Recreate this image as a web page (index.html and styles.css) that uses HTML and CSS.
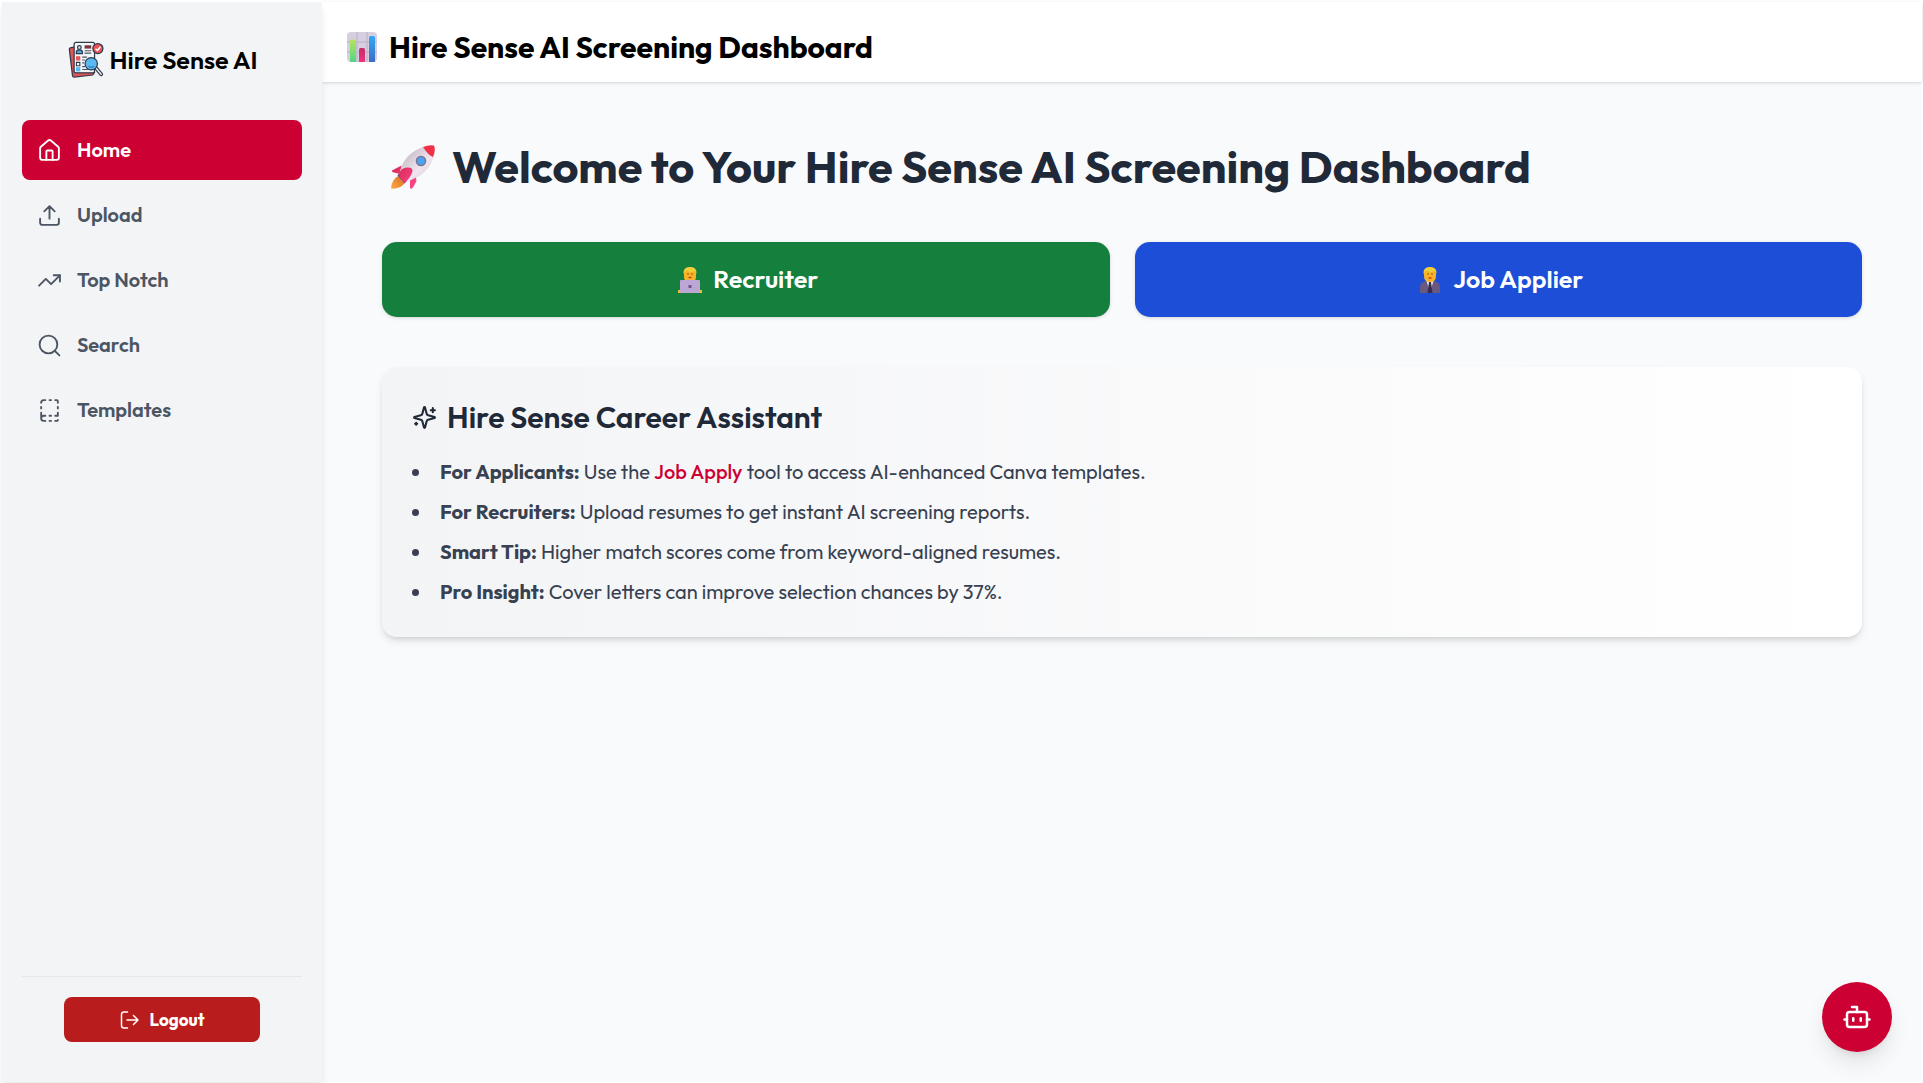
FILE: index.html
```html
<!DOCTYPE html>
<html lang="en">
<head>
<meta charset="utf-8">
<meta name="viewport" content="width=device-width, initial-scale=1">
<title>Hire Sense AI</title>
<link rel="stylesheet" href="styles.css">
</head>
<body>
<div class="shell">
  <aside class="sidebar">
    <div class="brand">
      <svg class="brand-logo" viewBox="0 0 38 40" aria-hidden="true">
        <g stroke="#2f3a48" stroke-width="1.3" stroke-linejoin="round" stroke-linecap="round">
          <path d="M6 6.500 2.500 7.200Q1.300 7.500 1.500 9L4.800 36.500Q5 38 6.500 38L26 35.800 28 33Z" fill="#e2555a"/>
          <rect x="6.500" y="1.500" width="21.500" height="32" rx="2" fill="#f3f6f9"/>
          <circle cx="12" cy="6.800" r="1.900" fill="#d7e3ee"/>
          <path d="M8.800 13.300v-1.500q0-2.500 3.200-2.500t3.300 2.500v1.500z" fill="#4fa9e6"/>
          <path d="m29.500 28.500 5.500 6.500" stroke-width="4"/>
          <path d="m29.500 28.500 5.500 6.500" stroke="#e9edf1" stroke-width="1.600"/>
          <circle cx="24.500" cy="24" r="6.500" fill="#5ab9f2"/>
          <circle cx="31.500" cy="8" r="5.300" fill="#ea5358"/>
        </g>
        <path d="m29 8.200 2 1.800 3.300-4" fill="none" stroke="#fff" stroke-width="1.600"/>
        <path d="M17.500 4.500h7v3.500h-7z" fill="#7b353c"/>
        <path d="M17.500 10.300h7M17.500 12.800h7M15 17h5M15 20h3M15 23h2M15 27h3M15 30h6" stroke="#4b5563" stroke-width="1.200"/>
        <path d="M8.500 16h4.500v4.500H8.500z" fill="#ea5358"/>
        <path d="M9 22.500h3.500V26H9z" fill="#fff" stroke="#2f3a48" stroke-width="1.200"/>
        <path d="M8.500 27.500h4.500V32H8.500z" fill="#5ab9f2"/>
        <path d="M21.500 26.500q3 2.500 6 0" fill="none" stroke="#2679b8" stroke-width="1.200"/>
      </svg>
      <span>Hire Sense AI</span>
    </div>
    <nav class="nav" aria-label="Main">
      <a class="nav-link active" href="#home" aria-current="page">
        <svg class="icon" viewBox="0 0 24 24"><path d="M15 21v-8a1 1 0 0 0-1-1h-4a1 1 0 0 0-1 1v8"/><path d="M3 10a2 2 0 0 1 .709-1.528l7-5.999a2 2 0 0 1 2.582 0l7 5.999A2 2 0 0 1 21 10v9a2 2 0 0 1-2 2H5a2 2 0 0 1-2-2z"/></svg>
        Home</a>
      <a class="nav-link" href="#upload">
        <svg class="icon" viewBox="0 0 24 24"><path d="M12 3v12M17 8l-5-5-5 5M21 15v4a2 2 0 0 1-2 2H5a2 2 0 0 1-2-2v-4"/></svg>
        Upload</a>
      <a class="nav-link" href="#top-notch">
        <svg class="icon" viewBox="0 0 24 24"><path d="M16 7h6v6"/><path d="m22 7-8.500 8.500-5-5L2 17"/></svg>
        Top Notch</a>
      <a class="nav-link" href="#search">
        <svg class="icon" viewBox="0 0 24 24"><circle cx="11" cy="11" r="8.500"/><path d="m21.500 21.500-4.400-4.400"/></svg>
        Search</a>
      <a class="nav-link" href="#templates">
        <svg class="icon" viewBox="0 0 24 24"><path d="M12 17h1.500M12 22h1.500M12 2h1.500M17.500 22H19a1 1 0 0 0 1-1M17.500 2H19a1 1 0 0 1 1 1v1.500M20 14v3h-2.500M20 8.500V10M4 10V8.500M4 19.500V14M4 4.500A2.500 2.500 0 0 1 6.500 2H8M8 22H6.500a1 1 0 0 1 0-5H8"/></svg>
        Templates</a>
    </nav>
    <div class="sidebar-foot">
      <button class="logout" type="button">
        <svg class="icon-logout" viewBox="0 0 20 20"><path d="M7.500 2H4Q1.500 2 1.500 4.500v11Q1.500 18 4 18h3.500"/><path d="M7 10h11M13.500 5.500 18 10l-4.500 4.500"/></svg>
        Logout</button>
    </div>
  </aside>

  <div class="page">
    <header class="topbar">
      <span class="topbar-title">
        <svg class="emoji emoji-md" viewBox="0 0 30 30" role="img" aria-label="Bar chart">
          <defs>
            <linearGradient id="bar-green" x1="0" y1="0" x2="0" y2="1"><stop offset="0" stop-color="#b6e35e"/><stop offset="1" stop-color="#52d684"/></linearGradient>
            <linearGradient id="bar-pink" x1="0" y1="0" x2="0" y2="1"><stop offset="0" stop-color="#c52d68"/><stop offset="1" stop-color="#f0347f"/></linearGradient>
            <linearGradient id="bar-blue" x1="0" y1="0" x2="0" y2="1"><stop offset="0" stop-color="#31a9f3"/><stop offset="1" stop-color="#3e6cc4"/></linearGradient>
          </defs>
          <rect width="30" height="30" rx="4" fill="#d6cfdf"/>
          <path d="M10 0v30M20 0v30M0 10h30M0 20h30" stroke="#b9b1c5" stroke-width="1"/>
          <path d="M3 30V9q0-1.500 1.500-1.500H7.500Q9 7.500 9 9v21z" fill="url(#bar-green)"/>
          <path d="M12 30V17.500q0-1.500 1.500-1.500h3q1.500 0 1.500 1.500V30z" fill="url(#bar-pink)"/>
          <path d="M22 30V5.500Q22 4 23.500 4h3Q28 4 28 5.500V30z" fill="url(#bar-blue)"/>
        </svg>
        Hire Sense AI Screening Dashboard</span>
    </header>

    <main class="content">
      <h1 class="welcome">
        <svg class="emoji emoji-lg" viewBox="0 0 44 44" role="img" aria-label="Rocket">
          <defs>
            <linearGradient id="hull" x1="0" y1="0" x2="1" y2="1"><stop offset=".2" stop-color="#c9bfca"/><stop offset=".6" stop-color="#f0e6ef"/><stop offset="1" stop-color="#cdbfd0"/></linearGradient>
            <linearGradient id="flame" x1="0" y1="1" x2="1" y2="0"><stop offset="0" stop-color="#ffad45"/><stop offset="1" stop-color="#d96a1d"/></linearGradient>
            <linearGradient id="fin" x1="0" y1="0" x2="1" y2="1"><stop offset="0" stop-color="#d92a58"/><stop offset="1" stop-color="#ff4b93"/></linearGradient>
          </defs>
          <path d="M7 31Q.500 35 0 43.500q8.500 1 13.500-5z" fill="url(#flame)"/>
          <path d="M10.500 20.500 1 25.500q-.500 2 2 2l6 1.500zM25 33l-6 10q1.500 1.500 3-.500L25.500 36z" fill="url(#fin)"/>
          <path d="M6.500 30.500 13.500 38.500l2-2L8 28.500z" fill="#4b4470"/>
          <path d="M8.500 29Q12 9 32 2l11 9Q38 29 16.500 37z" fill="url(#hull)"/>
          <path d="M32 2q6-2.500 11-1.500Q45 5 42 12q-5-2-10-10z" fill="#ef3148"/>
          <circle cx="30" cy="16" r="5.300" fill="#7c7590"/>
          <circle cx="30" cy="16" r="3.800" fill="#4aa3f5"/>
          <path d="M7.500 30.500Q9 23 16 22.500q6-.500 5.500 4Q19 34 13 38zM19 35.500l6-3q0 8-6 11z" fill="url(#fin)"/>
        </svg>
        Welcome to Your Hire Sense AI Screening Dashboard</h1>

      <div class="roles">
        <button class="role role-recruiter" type="button">
          <svg class="emoji emoji-sm" viewBox="0 0 26 26" aria-hidden="true">
            <path d="M7 6q0-6 6-6t6 6v4q0 5-6 5T7 10z" fill="#f7b325"/>
            <path d="M6.500 7Q6 0 13 0t6.500 7l-1.500-3q-5 2-8-.500Q8 4.500 6.500 7z" fill="#f0cf3c"/>
            <path d="M10 7h2M14 7h2" stroke="#9a5a20" stroke-width="1.200"/>
            <path d="M11.500 10.500h3" stroke="#b23a22" stroke-width="1.300"/>
            <path d="M1 23h24v3H1z" fill="#f2bd2c"/>
            <rect x="3" y="13" width="20" height="13" rx="1" fill="#bba6d6"/>
            <path d="M11.500 18h3v3h-3z" fill="#6d5592"/>
          </svg>
          Recruiter</button>
        <button class="role role-applier" type="button">
          <svg class="emoji emoji-sm" viewBox="0 0 26 26" aria-hidden="true">
            <path d="M3 26v-6q0-5 7-6h6q7 1 7 6v6z" fill="#67597f"/>
            <path d="M9.500 14h7L13 25z" fill="#ece6f2"/>
            <path d="M12 15h2l1.500 11h-5z" fill="#352d50"/>
            <path d="M7 6q0-6 6-6t6 6v3q0 6-6 6T7 9z" fill="#f7b325"/>
            <path d="M6.500 7Q6 0 13 0t6.500 7l-1.500-3q-5 2-8-.500Q8 4.500 6.500 7z" fill="#f0cf3c"/>
            <path d="M10 7h2M14 7h2" stroke="#9a5a20" stroke-width="1.200"/>
            <path d="M11.500 11h3" stroke="#c8372c" stroke-width="1.500"/>
          </svg>
          Job Applier</button>
      </div>

      <section class="assistant">
        <h2 class="assistant-title">
          <svg class="icon" viewBox="0 0 24 24"><path d="M9.937 15.500A2 2 0 0 0 8.500 14.063l-6.135-1.582a.5.5 0 0 1 0-.962L8.500 9.936A2 2 0 0 0 9.937 8.500l1.582-6.135a.5.5 0 0 1 .963 0L14.063 8.500A2 2 0 0 0 15.500 9.937l6.135 1.581a.5.5 0 0 1 0 .964L15.500 14.063a2 2 0 0 0-1.437 1.437l-1.582 6.135a.5.5 0 0 1-.963 0z"/><path d="M20 3v4M22 5h-4M4 17v2M5 18H3"/></svg>
          Hire Sense Career Assistant</h2>
        <ul class="tips">
          <li><strong>For Applicants:</strong> Use the <span class="accent">Job Apply</span> tool to access AI-enhanced Canva templates.</li>
          <li><strong>For Recruiters:</strong> Upload resumes to get instant AI screening reports.</li>
          <li><strong>Smart Tip:</strong> Higher match scores come from keyword-aligned resumes.</li>
          <li><strong>Pro Insight:</strong> Cover letters can improve selection chances by 37%.</li>
        </ul>
      </section>
    </main>
  </div>
</div>
<button class="chat" type="button" aria-label="Open assistant">
  <svg class="icon-bot" viewBox="0 0 24 24"><path d="M12 8V4H8"/><rect width="16" height="12" x="4" y="8" rx="2"/><path d="M2 14h2M20 14h2M15 13v2M9 13v2"/></svg>
</button>
</body>
</html>
```
FILE: styles.css
```css
*, *::before, *::after { box-sizing: border-box; }

body {
  margin: 0;
  padding: 2px 1px 1px 2px;
  background: #fff;
  color: #000;
  font: 400 20px/30px Outfit, Lato, sans-serif;
}

button { border: 0; font-family: inherit; color: #fff; cursor: pointer; }
a { color: inherit; text-decoration: none; }
h1, h2, ul { margin: 0; padding: 0; }

.shell {
  display: flex;
  min-height: calc(100vh - 3px);
  background: #f9fafc;
}

/* Line icons */
.icon, .icon-bot, .icon-logout {
  flex: none;
  fill: none;
  stroke: currentColor;
  stroke-width: 2;
  stroke-linecap: round;
  stroke-linejoin: round;
}
.icon { width: 25px; height: 25px; }
.nav .icon { stroke-width: 1.8; }
.icon-bot { width: 30px; height: 30px; }
.icon-logout { width: 20px; height: 20px; stroke-width: 1.5; }

/* Picture glyphs inside headings and buttons */
.emoji { flex: none; }
.emoji-sm { width: 26px; height: 26px; margin: 0 4px; }
.emoji-md { width: 30px; height: 30px; margin: 0 5px; }
.emoji-lg { width: 44px; height: 44px; margin: 0 9px; }

/* Sidebar */
.sidebar {
  position: relative;
  z-index: 1;
  display: flex;
  flex: none;
  flex-direction: column;
  width: 320px;
  padding: 20px;
  background: #f3f4f6;
  box-shadow: 0 5px 8px -1px rgb(0 0 0 / 10%);
}
.brand {
  display: flex;
  align-items: center;
  justify-content: center;
  gap: 5px;
  height: 76px;
  margin-bottom: 22px;
  font-size: 25px;
  font-weight: 600;
}
.brand-logo { width: 38px; height: 38px; }
.nav { display: grid; gap: 5px; }
.nav-link {
  display: flex;
  align-items: center;
  gap: 15px;
  padding: 15px;
  border-radius: 8px;
  color: #4b5563;
  font-weight: 600;
}
.nav-link.active { background: #cc0033; color: #fff; }
.sidebar-foot {
  display: flex;
  justify-content: center;
  margin-top: auto;
  padding: 20px 0;
  border-top: 1px solid #e5e7eb;
}
.logout {
  display: flex;
  align-items: center;
  justify-content: center;
  gap: 10px;
  width: 70%;
  padding: 10px;
  border-radius: 8px;
  background: #b91c1c;
  font-size: 17px;
  font-weight: 700;
  line-height: 25px;
}

/* Page */
.page { flex: 1; min-width: 0; }
.topbar {
  padding: 25px 20px 15px;
  background: #fff;
  box-shadow: 0 1px 4px rgb(0 0 0 / 10%), 0 1px 3px -1px rgb(0 0 0 / 10%);
  font-size: 30px;
  font-weight: 700;
  line-height: 40px;
}
.topbar-title, .welcome { display: flex; align-items: center; }
.topbar-title { gap: 7px; }
.content { padding: 60px; }
.welcome {
  gap: 8px;
  margin-bottom: 50px;
  color: #1f2937;
  font-size: 45px;
  font-weight: 700;
  line-height: 50px;
}
.roles {
  display: grid;
  grid-template-columns: 1fr 1fr;
  gap: 25px;
  margin-bottom: 50px;
}
.role {
  display: flex;
  align-items: center;
  justify-content: center;
  gap: 6px;
  padding: 20px;
  border-radius: 15px;
  box-shadow: 0 1px 4px rgb(0 0 0 / 10%), 0 1px 3px -1px rgb(0 0 0 / 10%);
  font-size: 25px;
  font-weight: 600;
  line-height: 35px;
}
.role-recruiter { background: #15803d; }
.role-applier { background: #1d4ed8; }

.assistant {
  padding: 30px;
  border-radius: 15px;
  background: linear-gradient(to right, #f3f4f6, #fff);
  box-shadow: 0 5px 8px -1px rgb(0 0 0 / 10%), 0 3px 5px -2px rgb(0 0 0 / 10%);
}
.assistant-title {
  display: flex;
  align-items: center;
  gap: 10px;
  margin-bottom: 20px;
  color: #1f2937;
  font-size: 30px;
  font-weight: 600;
  line-height: 40px;
}
.tips {
  display: grid;
  gap: 10px;
  color: #374151;
  list-style: disc inside;
}
.tips strong { font-weight: 700; }
.accent { color: #cc0033; font-weight: 500; }

/* Floating assistant button */
.chat {
  position: fixed;
  right: 31px;
  bottom: 31px;
  z-index: 2;
  display: grid;
  place-items: center;
  width: 70px;
  height: 70px;
  border-radius: 50%;
  background: #cc0033;
  box-shadow: 0 12px 24px -4px rgb(0 0 0 / 12%), 0 5px 8px -4px rgb(0 0 0 / 10%);
}
```
